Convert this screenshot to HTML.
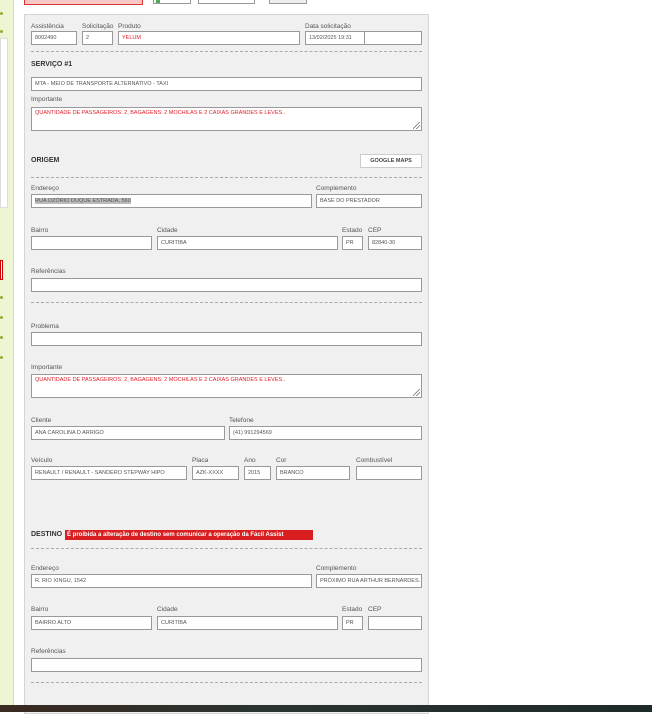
<!DOCTYPE html>
<html><head><meta charset="utf-8"><style>
*{margin:0;padding:0;box-sizing:border-box}
body{width:652px;height:712px;background:#fff;position:relative;overflow:hidden;font-family:"Liberation Sans",Tahoma,sans-serif;font-size:6px;color:#444}
div{position:absolute}
.l{font-size:6.5px;color:#555;white-space:nowrap}
.i{background:#fff;border:1px solid #999;height:14px;font-size:5.5px;line-height:12px;padding-left:3px;color:#555;white-space:nowrap;overflow:hidden}
.r{color:#e0202a}
.d{height:0;border-top:1px dashed #aaa;left:31px;width:391px}
.h{font-weight:bold;font-size:7px;color:#333}
.ta{background:#fff;border:1px solid #999;font-size:5.5px;padding:2px 3px;color:#e0202a}
.g{right:1px;bottom:1px;width:7px;height:7px;background:linear-gradient(135deg,transparent 45%,#666 45%,#666 52%,transparent 52%,transparent 70%,#666 70%,#666 77%,transparent 77%)}
</style></head><body>
<div style="left:0;top:0;width:14px;height:705px;background:#eef5d2;border-right:1px solid #d8e0b0"></div>
<div style="left:0;top:38px;width:8px;height:170px;background:#fff;border:1px solid #ddd"></div>
<div style="left:0;top:260px;width:3px;height:20px;border:1px solid #c00;background:#fff"></div>
<div style="left:0;top:12px;width:3px;height:3px;border-radius:2px;background:#9a3"></div>
<div style="left:0;top:30px;width:3px;height:3px;border-radius:2px;background:#9a3"></div>
<div style="left:0;top:296px;width:3px;height:3px;border-radius:2px;background:#9a3"></div>
<div style="left:0;top:316px;width:3px;height:3px;border-radius:2px;background:#9a3"></div>
<div style="left:0;top:336px;width:3px;height:3px;border-radius:2px;background:#9a3"></div>
<div style="left:0;top:356px;width:3px;height:3px;border-radius:2px;background:#9a3"></div>

<div style="left:24px;top:-2px;width:119px;height:7px;background:#f8c8c6;border:1px solid #d33"></div>
<div style="left:153px;top:-2px;width:38px;height:6px;background:#fff;border:1px solid #999"></div>
<div style="left:156px;top:0;width:4px;height:3px;background:#5a5"></div>
<div style="left:198px;top:-2px;width:57px;height:6px;background:#fff;border:1px solid #999"></div>
<div style="left:269px;top:-2px;width:38px;height:6px;background:#eee;border:1px solid #999"></div>

<div style="left:24px;top:14px;width:405px;height:700px;background:#f0f0f0;border:1px solid #d4d4d4"></div>

<div class="l" style="left:31px;top:23px">Assistência</div>
<div class="l" style="left:82px;top:23px">Solicitação</div>
<div class="l" style="left:118px;top:23px">Produto</div>
<div class="l" style="left:305px;top:23px">Data solicitação</div>
<div class="i" style="left:31px;top:31px;width:46px">8002490</div>
<div class="i" style="left:82px;top:31px;width:31px">2</div>
<div class="i r" style="left:118px;top:31px;width:182px">YELUM</div>
<div class="i" style="left:305px;top:31px;width:60px">13/02/2025 19:31</div>
<div class="i" style="left:364px;top:31px;width:58px"></div>
<div class="d" style="top:51px"></div>
<div class="h" style="left:31px;top:61px">SERVIÇO #1</div>
<div class="i" style="left:31px;top:77px;width:391px">MTA - MEIO DE TRANSPORTE ALTERNATIVO - TAXI</div>
<div class="l" style="left:31px;top:96px">Importante</div>
<div class="ta" style="left:31px;top:107px;width:391px;height:24px">QUANTIDADE DE PASSAGEIROS: 2, BAGAGENS: 2 MOCHILAS E 2 CAIXAS GRANDES E LEVES..<div class="g"></div></div>

<div class="h" style="left:31px;top:157px">ORIGEM</div>
<div style="left:360px;top:154px;width:62px;height:14px;background:#fff;border:1px solid #ccc;font-size:5.5px;font-weight:bold;text-align:center;line-height:12px;color:#444">GOOGLE MAPS</div>
<div class="d" style="top:177px"></div>
<div class="l" style="left:31px;top:185px">Endereço</div>
<div class="l" style="left:316px;top:185px">Complemento</div>
<div class="i" style="left:31px;top:194px;width:281px"><span style="background:#bbb">RUA OZÓRIO DUQUE ESTRADA, 560</span></div>
<div class="i" style="left:316px;top:194px;width:106px">BASE DO PRESTADOR</div>
<div class="l" style="left:31px;top:227px">Bairro</div>
<div class="l" style="left:157px;top:227px">Cidade</div>
<div class="l" style="left:342px;top:227px">Estado</div>
<div class="l" style="left:368px;top:227px">CEP</div>
<div class="i" style="left:31px;top:236px;width:121px"></div>
<div class="i" style="left:157px;top:236px;width:181px">CURITIBA</div>
<div class="i" style="left:342px;top:236px;width:21px">PR</div>
<div class="i" style="left:368px;top:236px;width:54px">82840-30</div>
<div class="l" style="left:31px;top:268px">Referências</div>
<div class="i" style="left:31px;top:278px;width:391px"></div>
<div class="d" style="top:302px"></div>
<div class="l" style="left:31px;top:323px">Problema</div>
<div class="i" style="left:31px;top:332px;width:391px"></div>
<div class="l" style="left:31px;top:364px">Importante</div>
<div class="ta" style="left:31px;top:374px;width:391px;height:24px">QUANTIDADE DE PASSAGEIROS: 2, BAGAGENS: 2 MOCHILAS E 2 CAIXAS GRANDES E LEVES..<div class="g"></div></div>

<div class="l" style="left:31px;top:417px">Cliente</div>
<div class="l" style="left:229px;top:417px">Telefone</div>
<div class="i" style="left:31px;top:426px;width:194px">ANA CAROLINA D ARRIGO</div>
<div class="i" style="left:229px;top:426px;width:193px">(41) 991294569</div>
<div class="l" style="left:31px;top:457px">Veículo</div>
<div class="l" style="left:192px;top:457px">Placa</div>
<div class="l" style="left:244px;top:457px">Ano</div>
<div class="l" style="left:276px;top:457px">Cor</div>
<div class="l" style="left:356px;top:457px">Combustível</div>
<div class="i" style="left:31px;top:466px;width:156px">RENAULT / RENAULT - SANDERO STEPWAY HIPO</div>
<div class="i" style="left:192px;top:466px;width:47px">AZK-XXXX</div>
<div class="i" style="left:244px;top:466px;width:27px">2015</div>
<div class="i" style="left:276px;top:466px;width:74px">BRANCO</div>
<div class="i" style="left:356px;top:466px;width:66px"></div>

<div class="h" style="left:31px;top:531px">DESTINO</div>
<div style="left:65px;top:530px;width:248px;height:10px;background:#d81e1e;color:#fff;font-size:6px;font-weight:bold;line-height:10px;padding-left:2px;white-space:nowrap">É proibida a alteração de destino sem comunicar a operação da Fácil Assist</div>
<div class="d" style="top:548px"></div>
<div class="l" style="left:31px;top:565px">Endereço</div>
<div class="l" style="left:316px;top:565px">Complemento</div>
<div class="i" style="left:31px;top:574px;width:281px">R. RIO XINGU, 1542</div>
<div class="i" style="left:316px;top:574px;width:106px">PRÓXIMO RUA ARTHUR BERNARDES.</div>
<div class="l" style="left:31px;top:606px">Bairro</div>
<div class="l" style="left:157px;top:606px">Cidade</div>
<div class="l" style="left:342px;top:606px">Estado</div>
<div class="l" style="left:368px;top:606px">CEP</div>
<div class="i" style="left:31px;top:616px;width:121px">BAIRRO ALTO</div>
<div class="i" style="left:157px;top:616px;width:181px">CURITIBA</div>
<div class="i" style="left:342px;top:616px;width:21px">PR</div>
<div class="i" style="left:368px;top:616px;width:54px"></div>
<div class="l" style="left:31px;top:648px">Referências</div>
<div class="i" style="left:31px;top:658px;width:391px"></div>
<div class="d" style="top:682px"></div>

<div style="left:0;top:705px;width:652px;height:7px;background:linear-gradient(90deg,#3a2a22,#2a3430 40%,#1e2a2a)"></div>
</body></html>
